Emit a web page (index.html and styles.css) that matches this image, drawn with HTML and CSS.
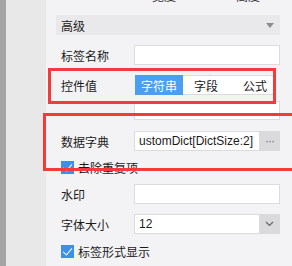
FILE: index.html
```html
<!DOCTYPE html>
<html>
<head>
    <title>Properties</title>
    <link rel="stylesheet" href="styles.css">
</head>
<body>
    <div class="page">
        <div class="rail"></div>
        <div class="gutter"></div>
        <div class="panel">
            <div class="dims">
                <span class="dim-width">宽度</span>
                <span class="dim-height">高度</span>
            </div>
            <div class="group-bar">
                <span>高级</span>
                <span class="caret"></span>
            </div>
            <div class="row">
                <label>标签名称</label>
                <div class="field"></div>
            </div>
            <div class="row row-seg">
                <label>控件值</label>
                <div class="segments">
                    <span class="seg seg-first active">字符串</span>
                    <span class="seg seg-mid">字段</span>
                    <span class="seg seg-last">公式</span>
                </div>
            </div>
            <div class="row row-value">
                <label></label>
                <div class="field"></div>
            </div>
            <div class="row row-dict">
                <label>数据字典</label>
                <div class="field field-btn">
                    <span class="field-text">ustomDict[DictSize:2]</span>
                    <span class="side-btn dots">&middot;&middot;&middot;</span>
                </div>
            </div>
            <div class="check-row check-dedupe">
                <span class="check"></span>
                <span>去除重复项</span>
            </div>
            <div class="row row-mark">
                <label>水印</label>
                <div class="field"></div>
            </div>
            <div class="row">
                <label>字体大小</label>
                <div class="field field-btn">
                    <span class="field-text">12</span>
                    <span class="side-btn">
                        <svg width="9" height="6" viewBox="0 0 9 6"><path d="M1 1 L4.5 4.5 L8 1" fill="none" stroke="#666" stroke-width="1.2"/></svg>
                    </span>
                </div>
            </div>
            <div class="check-row check-tags">
                <span class="check"></span>
                <span>标签形式显示</span>
            </div>
        </div>

        <!-- annotation boxes drawn over the form -->
        <div class="mark mark-value"></div>
        <div class="mark mark-dict"></div>
    </div>
</body>
</html>
```

FILE: styles.css
```css
body {
    margin: 0;
    padding: 0;
    font-family: "Liberation Sans", "Noto Sans CJK SC", sans-serif;
    font-size: 12px;
    color: #1a1a1a;
}

.page {
    position: relative;
    display: flex;
    width: 292px;
    height: 266px;
    overflow: hidden;
}

.rail {
    width: 6px;
    background-color: #a4a4a4;
}

.gutter {
    width: 40px;
    background-color: #e8e8e8;
}

.panel {
    flex: 1;
    padding: 0 12px 0 10px;
    background-color: #f3f3f5;
}

.dims {
    display: flex;
    height: 15px;
    color: #333;
}

.dims span {
    display: block;
    margin-top: -9px;
    line-height: 12px;
}

.dim-width {
    margin-left: 96px;
}

.dim-height {
    margin-left: 60px;
}

.group-bar {
    display: flex;
    align-items: center;
    justify-content: space-between;
    height: 20px;
    padding: 0 6px 0 5px;
    background-color: #e9e9eb;
}

.caret {
    width: 0;
    height: 0;
    border-left: 4px solid transparent;
    border-right: 4px solid transparent;
    border-top: 5px solid #8c8c8c;
}

.row {
    display: flex;
    align-items: center;
    height: 20px;
    margin-top: 10px;
}

.row label {
    width: 73px;
    padding-left: 5px;
}

.row-value {
    margin-top: 6px;
    height: 19px;
}

.row-value .field {
    height: 19px;
}

.row-dict {
    margin-top: 11px;
}

.field {
    box-sizing: border-box;
    flex: 1;
    height: 20px;
    background-color: #fff;
    border: 1px solid #dcdcdc;
}

.field-btn {
    display: flex;
    align-items: center;
}

.field-text {
    flex: 1;
    padding-left: 4px;
    white-space: nowrap;
    overflow: hidden;
}

.side-btn {
    display: flex;
    align-items: center;
    justify-content: center;
    width: 21px;
    height: 20px;
    margin: -1px -1px -1px 0;
    background-color: #dadadd;
}

.dots {
    color: #777;
    font-size: 12px;
    letter-spacing: -1px;
}

.segments {
    box-sizing: border-box;
    display: flex;
    width: 139px;
    height: 20px;
    margin-left: 1px;
    background-color: #fff;
    border: 1px solid #dcdcdc;
    border-left: none;
}

.seg {
    display: flex;
    align-items: center;
    justify-content: center;
    margin-top: -1px;
    height: 20px;
}

.seg-first {
    width: 48px;
}

.seg-mid {
    width: 46px;
}

.seg-last {
    flex: 1;
    justify-content: flex-end;
    padding-right: 6px;
}

.seg.active {
    background-color: #4a9ff3;
    color: #fff;
}

.check-row {
    display: flex;
    align-items: center;
    height: 13px;
    padding-left: 5px;
}

.check-dedupe {
    margin-top: 10px;
}

.check-tags {
    margin-top: 11px;
}

.check {
    position: relative;
    width: 13px;
    height: 13px;
    margin-right: 4px;
    background-color: #3d8fe8;
}

.check::after {
    content: "";
    position: absolute;
    left: 4px;
    top: 1px;
    width: 4px;
    height: 8px;
    border-right: 1.5px solid #fff;
    border-bottom: 1.5px solid #fff;
    transform: rotate(40deg);
}

.row-mark {
    margin-top: 10px;
}

.mark {
    position: absolute;
    box-sizing: border-box;
    border: 3px solid #f43b3b;
}

.mark-value {
    left: 48px;
    top: 68px;
    width: 228px;
    height: 36px;
}

.mark-dict {
    left: 43px;
    top: 113px;
    width: 252px;
    height: 58px;
}
```
